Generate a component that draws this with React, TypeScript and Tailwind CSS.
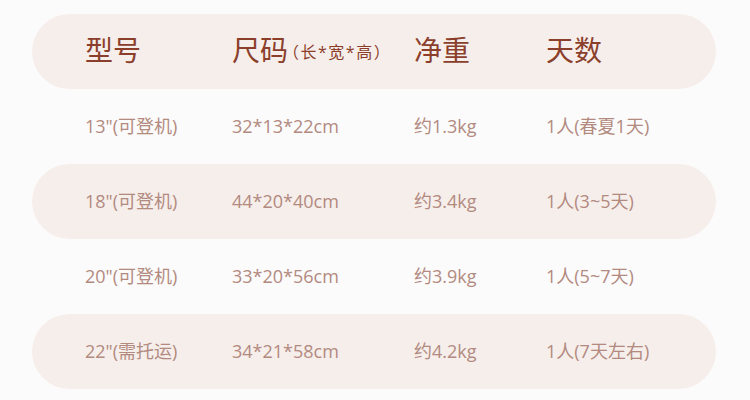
const rows = [
  { model: '13"(可登机)', size: "32*13*22cm", weight: "约1.3kg", days: "1人(春夏1天)" },
  { model: '18"(可登机)', size: "44*20*40cm", weight: "约3.4kg", days: "1人(3~5天)" },
  { model: '20"(可登机)', size: "33*20*56cm", weight: "约3.9kg", days: "1人(5~7天)" },
  { model: '22"(需托运)', size: "34*21*58cm", weight: "约4.2kg", days: "1人(7天左右)" },
]

export default function App() {
  return (
    <div
      className="w-[750px] h-[400px] bg-[#fcfbfb] pt-[14px] px-[32px] overflow-hidden"
      style={{ fontFamily: '"Open Sans", "Noto Sans CJK SC", sans-serif' }}
    >
      <div className="w-[684px]">
        {/* Header */}
        <div className="grid grid-cols-[147px_182px_132px_1fr] items-center h-[75px] pl-[53px] pb-[4px] rounded-full bg-[#f6eeeb] text-[#8b3f2b] text-[28px]">
          <span>型号</span>
          <span className="flex items-center">
            尺码
            <span className="text-[16px] tracking-[1.5px] -ml-[5px] mt-[4px]">（长*宽*高）</span>
          </span>
          <span>净重</span>
          <span>天数</span>
        </div>

        {rows.map((r, i) => (
          <div
            key={i}
            className={
              "grid grid-cols-[147px_182px_132px_1fr] items-center h-[75px] pl-[53px] rounded-full text-[#b28a80] text-[18px] " +
              (i % 2 === 1 ? "bg-[#f6eeeb]" : "")
            }
          >
            <span>{r.model}</span>
            <span>{r.size}</span>
            <span>{r.weight}</span>
            <span>{r.days}</span>
          </div>
        ))}
      </div>
    </div>
  )
}
